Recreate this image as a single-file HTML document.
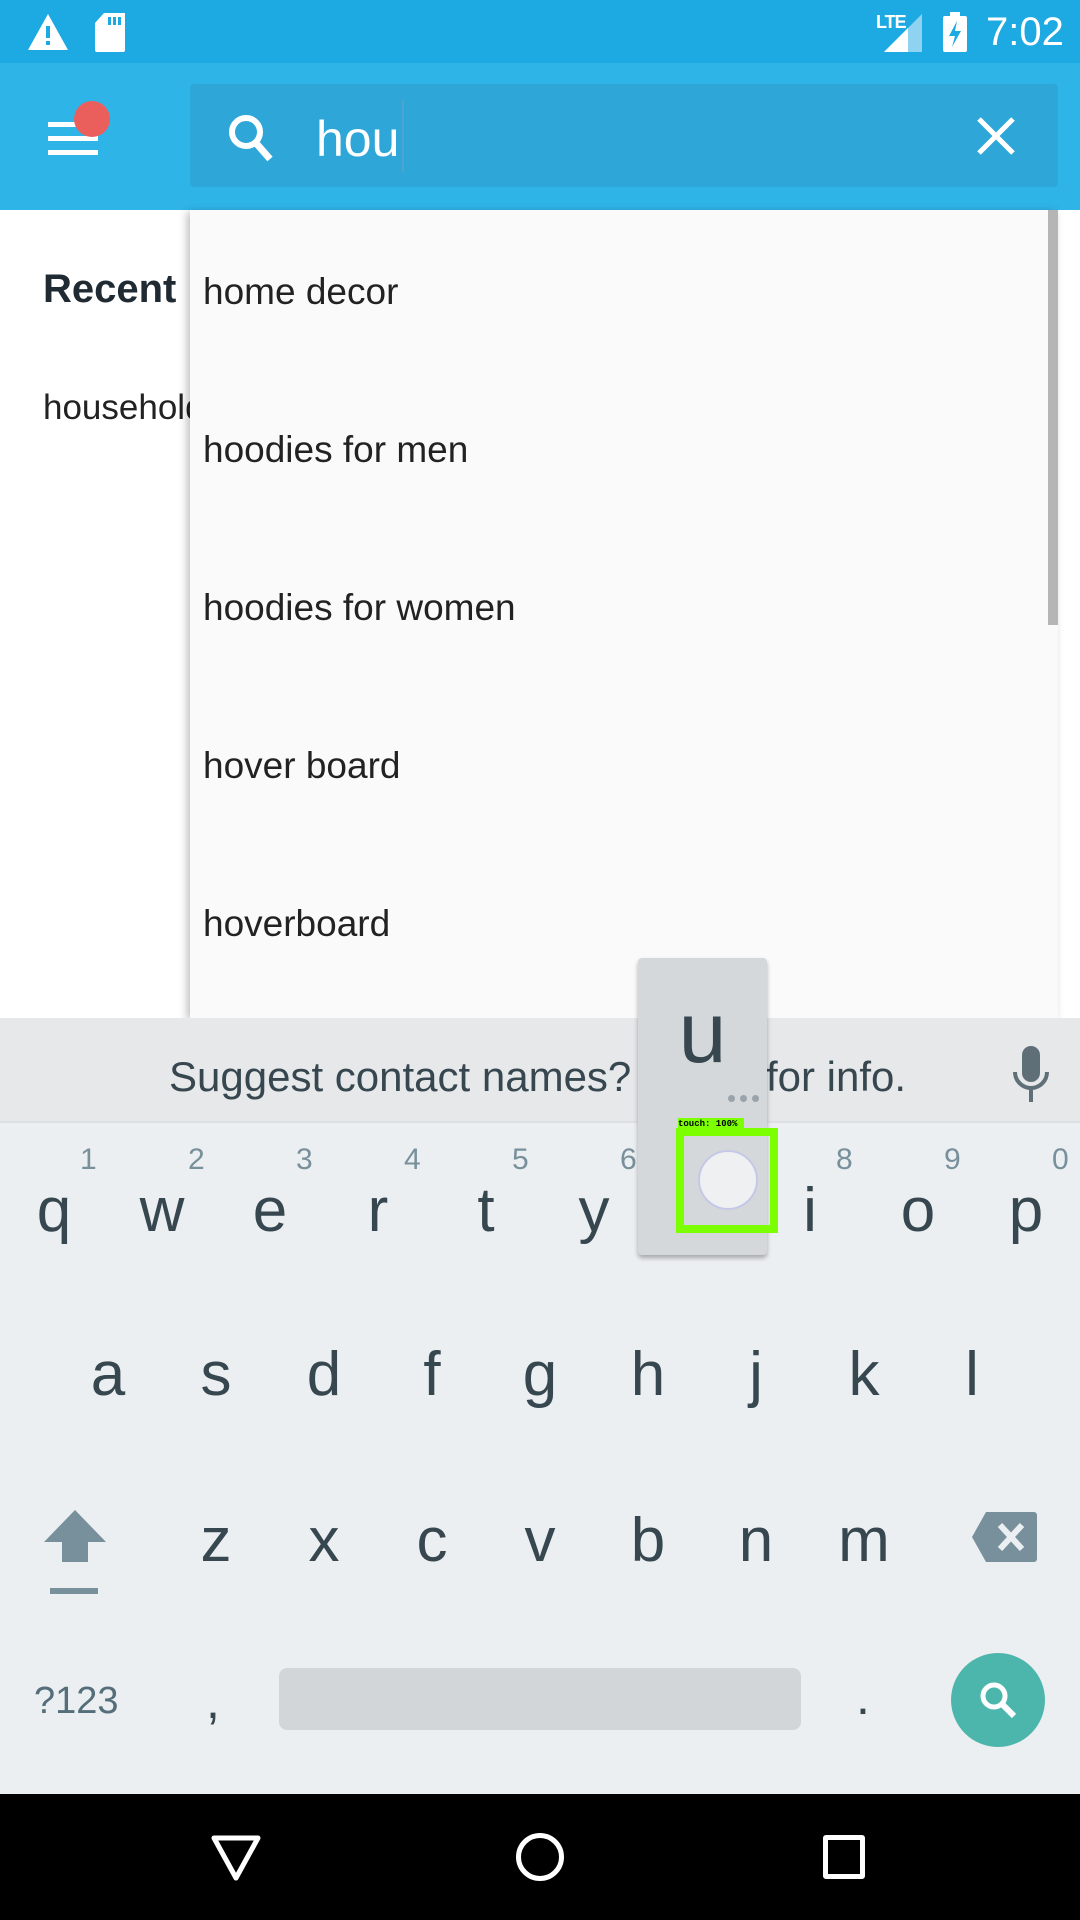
<!DOCTYPE html>
<html><head><meta charset="utf-8">
<style>
*{margin:0;padding:0;box-sizing:border-box}
body{width:1080px;height:1920px;overflow:hidden;position:relative;background:#fff;font-family:"Liberation Sans",sans-serif}
.abs{position:absolute}
.key{position:absolute;width:108px;text-align:center;font-size:62px;color:#37474f;line-height:1}
.num{position:absolute;font-size:30px;color:#78909c;line-height:1}
.item{position:absolute;left:203px;font-size:37px;color:#222;line-height:1}
</style></head><body>
<!-- status bar -->
<div class="abs" style="left:0;top:0;width:1080px;height:63px;background:#1da9e1"></div>
<svg class="abs" style="left:26px;top:12px" width="44" height="40" viewBox="0 0 44 40"><path d="M22 2 L42 38 L2 38 Z" fill="#fff"/><rect x="20" y="14" width="4" height="12" fill="#1da9e1"/><rect x="20" y="29" width="4" height="4" fill="#1da9e1"/></svg>
<svg class="abs" style="left:94px;top:12px" width="34" height="40" viewBox="0 0 34 40"><path d="M10 1 H31 V38 a2 2 0 0 1 -2 2 H3 a2 2 0 0 1 -2 -2 V11 Z" fill="#fff"/><rect x="14" y="5" width="3" height="8" fill="#1da9e1"/><rect x="19" y="5" width="3" height="8" fill="#1da9e1"/><rect x="24" y="5" width="3" height="8" fill="#1da9e1"/></svg>
<div class="abs" style="left:876px;top:12px;font-size:18px;color:#fff;font-weight:bold;letter-spacing:-1px">LTE</div>
<svg class="abs" style="left:884px;top:14px" width="38" height="38" viewBox="0 0 38 38"><path d="M38 0 V38 H0 Z" fill="#8fd3f0"/><path d="M24 14 V38 H0 Z" fill="#fff"/></svg>
<svg class="abs" style="left:942px;top:12px" width="26" height="40" viewBox="0 0 26 40"><rect x="8" y="0" width="10" height="4" fill="#fff"/><rect x="1" y="4" width="24" height="36" rx="2" fill="#fff"/><path d="M15 9 L7 24 H13 L10 35 L19 19 H13 Z" fill="#1da9e1"/></svg>
<div class="abs" style="left:986px;top:10px;font-size:40px;color:#fff">7:02</div>
<!-- app bar -->
<div class="abs" style="left:0;top:63px;width:1080px;height:147px;background:#2fb4e8"></div>
<div class="abs" style="left:48px;top:122px;width:50px;height:5px;background:#fff"></div>
<div class="abs" style="left:48px;top:136px;width:50px;height:5px;background:#fff"></div>
<div class="abs" style="left:48px;top:150px;width:50px;height:5px;background:#fff"></div>
<div class="abs" style="left:74px;top:101px;width:36px;height:36px;border-radius:50%;background:#ea5f5c"></div>
<div class="abs" style="left:190px;top:84px;width:868px;height:103px;background:#2ea6d8;border-radius:4px"></div>
<svg class="abs" style="left:226px;top:112px" width="50" height="52" viewBox="0 0 50 52"><circle cx="20" cy="20" r="14" fill="none" stroke="#fff" stroke-width="6"/><path d="M30 31 L44 47" stroke="#fff" stroke-width="7"/></svg>
<div class="abs" style="left:316px;top:110px;font-size:50px;color:#fff">hou</div>
<div class="abs" style="left:402px;top:100px;width:2px;height:72px;background:#4fa3d1"></div>
<svg class="abs" style="left:976px;top:116px" width="40" height="40" viewBox="0 0 40 40"><path d="M3 3 L37 37 M37 3 L3 37" stroke="#fff" stroke-width="5"/></svg>
<!-- background content -->
<div class="abs" style="left:43px;top:267px;font-size:40px;font-weight:bold;color:#1f2a33">Recent</div>
<div class="abs" style="left:43px;top:388px;font-size:35px;color:#222">household</div>
<!-- dropdown -->
<div class="abs" style="left:190px;top:210px;width:868px;height:808px;background:#fafafa;box-shadow:-3px 2px 8px rgba(0,0,0,0.25)"></div>
<div class="abs" style="left:1048px;top:210px;width:10px;height:415px;background:#b5b5b5"></div>
<div class="item" style="top:273px">home decor</div>
<div class="item" style="top:431px">hoodies for men</div>
<div class="item" style="top:589px">hoodies for women</div>
<div class="item" style="top:747px">hover board</div>
<div class="item" style="top:905px">hoverboard</div>
<!-- keyboard -->
<div class="abs" style="left:0;top:1018px;width:1080px;height:776px;background:#eceff1"></div>
<div class="abs" style="left:0;top:1018px;width:1080px;height:105px;background:#e6e8ea;border-bottom:2px solid #dde0e2"></div>
<div class="abs" style="left:169px;top:1053px;font-size:42px;color:#37474f">Suggest contact names? Tap</div>
<div class="abs" style="left:766px;top:1053px;font-size:42px;color:#37474f">for info.</div>
<svg class="abs" style="left:1010px;top:1046px" width="42" height="60" viewBox="0 0 42 60"><rect x="12" y="0" width="18" height="36" rx="9" fill="#5f6f78"/><path d="M5 26 a16 16 0 0 0 32 0" fill="none" stroke="#5f6f78" stroke-width="4"/><rect x="19" y="42" width="4" height="14" fill="#5f6f78"/></svg>
<!-- row1 -->
<div class="num" style="left:80px;top:1145px">1</div><div class="num" style="left:188px;top:1145px">2</div><div class="num" style="left:296px;top:1145px">3</div><div class="num" style="left:404px;top:1145px">4</div><div class="num" style="left:512px;top:1145px">5</div><div class="num" style="left:620px;top:1145px">6</div><div class="num" style="left:836px;top:1145px">8</div><div class="num" style="left:944px;top:1145px">9</div><div class="num" style="left:1052px;top:1145px">0</div>
<div class="key" style="left:0;top:1180px">q</div><div class="key" style="left:108px;top:1180px">w</div><div class="key" style="left:216px;top:1180px">e</div><div class="key" style="left:324px;top:1180px">r</div><div class="key" style="left:432px;top:1180px">t</div><div class="key" style="left:540px;top:1180px">y</div><div class="key" style="left:756px;top:1180px">i</div><div class="key" style="left:864px;top:1180px">o</div><div class="key" style="left:972px;top:1180px">p</div>
<!-- row2 -->
<div class="key" style="left:54px;top:1344px">a</div><div class="key" style="left:162px;top:1344px">s</div><div class="key" style="left:270px;top:1344px">d</div><div class="key" style="left:378px;top:1344px">f</div><div class="key" style="left:486px;top:1344px">g</div><div class="key" style="left:594px;top:1344px">h</div><div class="key" style="left:702px;top:1344px">j</div><div class="key" style="left:810px;top:1344px">k</div><div class="key" style="left:918px;top:1344px">l</div>
<!-- row3 -->
<svg class="abs" style="left:42px;top:1508px" width="66" height="90" viewBox="0 0 66 90"><path d="M33 2 L64 34 H46 V54 H20 V34 H2 Z" fill="#78909c"/><rect x="8" y="80" width="48" height="6" fill="#78909c"/></svg>
<div class="key" style="left:162px;top:1510px">z</div><div class="key" style="left:270px;top:1510px">x</div><div class="key" style="left:378px;top:1510px">c</div><div class="key" style="left:486px;top:1510px">v</div><div class="key" style="left:594px;top:1510px">b</div><div class="key" style="left:702px;top:1510px">n</div><div class="key" style="left:810px;top:1510px">m</div>
<svg class="abs" style="left:972px;top:1512px" width="66" height="50" viewBox="0 0 66 50"><path d="M14 0 H62 a3 3 0 0 1 3 3 V47 a3 3 0 0 1 -3 3 H14 L0 25 Z" fill="#78909c"/><path d="M28 13 L50 37 M50 13 L28 37" stroke="#eceff1" stroke-width="6"/></svg>
<!-- row4 -->
<div class="abs" style="left:34px;top:1680px;font-size:38px;color:#546e7a">?123</div>
<div class="abs" style="left:206px;top:1672px;font-size:50px;color:#37474f">,</div>
<div class="abs" style="left:279px;top:1668px;width:522px;height:62px;background:#d3d6d9;border-radius:8px"></div>
<div class="abs" style="left:856px;top:1668px;font-size:50px;color:#37474f">.</div>
<div class="abs" style="left:951px;top:1653px;width:94px;height:94px;border-radius:50%;background:#4db6ac"></div>
<svg class="abs" style="left:974px;top:1676px" width="50" height="50" viewBox="0 0 50 50"><circle cx="20" cy="20" r="11" fill="none" stroke="#fff" stroke-width="5"/><path d="M28 28 L40 40" stroke="#fff" stroke-width="6"/></svg>
<!-- key popup -->
<div class="abs" style="left:638px;top:958px;width:129px;height:297px;background:#d5d8db;border-radius:4px;box-shadow:0 3px 5px rgba(0,0,0,0.3)"></div>
<div class="abs" style="left:638px;top:990px;width:129px;text-align:center;font-size:86px;color:#37474f;line-height:1">u</div>
<div class="abs" style="left:728px;top:1095px;width:7px;height:7px;border-radius:50%;background:#9aa3a9;box-shadow:12px 0 #9aa3a9,24px 0 #9aa3a9"></div>
<div class="abs" style="left:678px;top:1118px;width:66px;height:12px;background:#7cff00;font-family:'Liberation Mono',monospace;font-size:9px;font-weight:bold;line-height:12px;color:#000">touch: 100%</div>
<div class="abs" style="left:676px;top:1128px;width:102px;height:105px;border:8px solid #7cff00"></div>
<div class="abs" style="left:698px;top:1150px;width:60px;height:60px;border-radius:50%;background:#eef0f2;border:2px solid #c5c8e6"></div>
<!-- nav bar -->
<div class="abs" style="left:0;top:1794px;width:1080px;height:126px;background:#000"></div>
<svg class="abs" style="left:210px;top:1834px" width="52" height="48" viewBox="0 0 52 48"><path d="M4 4 H48 L26 44 Z" fill="none" stroke="#fff" stroke-width="5" stroke-linejoin="round"/></svg>
<div class="abs" style="left:516px;top:1833px;width:48px;height:48px;border:5px solid #fff;border-radius:50%"></div>
<div class="abs" style="left:823px;top:1835px;width:42px;height:44px;border:5px solid #fff;border-radius:3px"></div>
</body></html>
